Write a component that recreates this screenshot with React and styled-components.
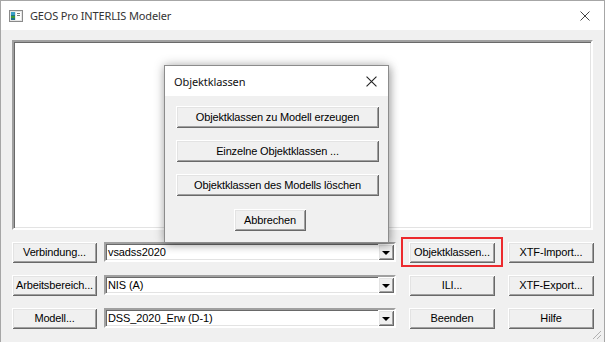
import React from "react";
import styled, { createGlobalStyle, css } from "styled-components";

const Global = createGlobalStyle`
  html, body { margin: 0; padding: 0; background: #ffffff; }
  body { font-family: "Liberation Sans", Arial, sans-serif; }
  * { box-sizing: border-box; }
`;

const Window = styled.div`
  position: relative;
  width: 605px;
  height: 342px;
  border: 1px solid #a6a6a6;
  border-bottom: none;
  background: #f0f0f0;
  display: flex;
  flex-direction: column;
  overflow: hidden;
`;

const TitleBar = styled.div`
  height: 29px;
  flex: none;
  background: #ffffff;
  display: flex;
  align-items: center;
  padding: 0 0 0 8px;
  font-family: "Noto Sans", "Open Sans", sans-serif;
  font-size: 11px;
  letter-spacing: -0.15px;
  color: #333;
`;

const TitleText = styled.span`
  margin-left: 7px;
  flex: 1;
`;

const CloseBox = styled.div`
  width: 46px;
  height: 29px;
  display: flex;
  align-items: center;
  justify-content: center;
  margin-right: -4px;
`;

const Body = styled.div`
  flex: 1;
  padding: 10px 10px 0 11px;
  display: flex;
  flex-direction: column;
`;

const sunken = css`
  border-style: solid;
  border-width: 2px;
  border-color: #a0a0a0 #ffffff #ffffff #a0a0a0;
  box-shadow: inset 1px 1px 0 #696969, inset -1px -1px 0 #e3e3e3;
`;

const raised = css`
  background: #f0f0f0;
  border: none;
  box-shadow: inset 1px 1px 0 #ffffff, inset -1px -1px 0 #696969,
    inset 2px 2px 0 #e3e3e3, inset -2px -2px 0 #a0a0a0;
`;

const ListArea = styled.div`
  height: 190px;
  width: 581px;
  background: #ffffff;
  ${sunken};
`;

const Controls = styled.div`
  margin-top: 12px;
  display: grid;
  grid-template-columns: 85px 292px 92px 92px;
  column-gap: 7px;
  row-gap: 12px;
  grid-auto-rows: 21px;
`;

const Cell = styled.div`
  padding-left: ${(p) => p.$indent || 0}px;
`;

const Button = styled.button`
  ${raised};
  font-family: "Liberation Sans", Arial, sans-serif;
  font-size: 11px;
  color: #000;
  height: ${(p) => p.$h || 21}px;
  width: ${(p) => (p.$w ? p.$w + "px" : "100%")};
  padding: 0 2px 1px;
  display: flex;
  align-items: center;
  justify-content: center;
  white-space: nowrap;
  letter-spacing: -0.15px;
`;

const Highlight = styled.div`
  position: relative;
  &::after {
    content: "";
    position: absolute;
    left: -8px;
    right: -8px;
    top: -5px;
    bottom: -4px;
    border: 2px solid #ec2a2e;
    pointer-events: none;
  }
`;

const Combo = styled.div`
  ${sunken};
  height: 20px;
  background: #ffffff;
  display: flex;
  align-items: stretch;
  font-size: 11px;
  color: #000;
`;

const ComboText = styled.span`
  flex: 1;
  padding-left: 2px;
  display: flex;
  align-items: center;
  letter-spacing: -0.1px;
`;

const DropBtn = styled.div`
  ${raised};
  width: 16px;
  display: flex;
  align-items: center;
  justify-content: center;
`;

const Arrow = styled.div`
  width: 0;
  height: 0;
  border-left: 4px solid transparent;
  border-right: 4px solid transparent;
  border-top: 4px solid #000;
  margin-top: 1px;
`;

const Grip = styled.svg`
  position: absolute;
  right: 2px;
  bottom: 2px;
`;

const Dialog = styled.div`
  position: absolute;
  left: 163px;
  top: 64px;
  width: 225px;
  height: 178px;
  border: 1px solid #8c8c8c;
  background: #f0f0f0;
  box-shadow: 0 0 10px rgba(0, 0, 0, 0.28), 2px 3px 8px rgba(0, 0, 0, 0.18);
  display: flex;
  flex-direction: column;
`;

const DialogTitle = styled.div`
  height: 30px;
  background: #ffffff;
  display: flex;
  align-items: center;
  padding-left: 9px;
  font-family: "Noto Sans", "Open Sans", sans-serif;
  font-size: 11px;
  letter-spacing: -0.1px;
  color: #111;
  & > span { flex: 1; }
`;

const DialogClose = styled.div`
  width: 30px;
  height: 30px;
  display: flex;
  align-items: center;
  justify-content: center;
  margin-right: 2px;
`;

const DialogBody = styled.div`
  padding: 10px 9px 0 11px;
  display: flex;
  flex-direction: column;
  gap: 12px;
`;

const CancelRow = styled.div`
  padding-left: 58px;
  margin-top: 1px;
`;

const XIcon = ({ size = 10, color = "#333" }) => (
  <svg width={size} height={size} viewBox="0 0 10 10">
    <path d="M0.5 0.5 L9.5 9.5 M9.5 0.5 L0.5 9.5" stroke={color} strokeWidth="1" fill="none" />
  </svg>
);

const AppIcon = () => (
  <svg width="14" height="12" viewBox="0 0 14 12">
    <rect x="0.5" y="0.5" width="13" height="11" fill="#e6e6e6" stroke="#8a8a8a" />
    <rect x="2" y="2" width="4" height="8" fill="#1f6f8b" />
    <rect x="2" y="2" width="4" height="3" fill="#3aa0c8" />
    <rect x="2" y="6" width="4" height="2" fill="#3c9a3c" />
    <rect x="7" y="2" width="5" height="8" fill="#ffffff" />
    <rect x="8" y="3" width="3" height="1" fill="#7a7a7a" />
    <rect x="8" y="5" width="3" height="1" fill="#7a7a7a" />
  </svg>
);

const rows = [
  { label: "Verbindung...", value: "vsadss2020", mid: "Objektklassen...", right: "XTF-Import...", hl: true },
  { label: "Arbeitsbereich...", value: "NIS (A)", mid: "ILI...", right: "XTF-Export..." },
  { label: "Modell...", value: "DSS_2020_Erw (D-1)", mid: "Beenden", right: "Hilfe" },
];

export default function App() {
  return (
    <>
      <Global />
      <Window>
        <TitleBar>
          <AppIcon />
          <TitleText>GEOS Pro INTERLIS Modeler</TitleText>
          <CloseBox>
            <XIcon size={10} color="#444" />
          </CloseBox>
        </TitleBar>
        <Body>
          <ListArea />
          <Controls>
            {rows.map((r) => (
              <React.Fragment key={r.label}>
                <Button>{r.label}</Button>
                <Combo>
                  <ComboText>{r.value}</ComboText>
                  <DropBtn>
                    <Arrow />
                  </DropBtn>
                </Combo>
                <Cell $indent={6}>
                  {r.hl ? (
                    <Highlight>
                      <Button>{r.mid}</Button>
                    </Highlight>
                  ) : (
                    <Button>{r.mid}</Button>
                  )}
                </Cell>
                <Cell $indent={6}>
                  <Button>{r.right}</Button>
                </Cell>
              </React.Fragment>
            ))}
          </Controls>
        </Body>
        <Grip width="11" height="11" viewBox="0 0 11 11">
          <path d="M10 2 L2 10 M10 6 L6 10 M10 10 L10 10" stroke="#b0b0b0" strokeWidth="1" />
        </Grip>
        <Dialog>
          <DialogTitle>
            <span>Objektklassen</span>
            <DialogClose>
              <XIcon size={11} color="#222" />
            </DialogClose>
          </DialogTitle>
          <DialogBody>
            <Button $w={203} $h={22}>Objektklassen zu Modell erzeugen</Button>
            <Button $w={203} $h={22}>Einzelne Objektklassen ...</Button>
            <Button $w={203} $h={22}>Objektklassen des Modells löschen</Button>
            <CancelRow>
              <Button $w={72} $h={22}>Abbrechen</Button>
            </CancelRow>
          </DialogBody>
        </Dialog>
      </Window>
    </>
  );
}
